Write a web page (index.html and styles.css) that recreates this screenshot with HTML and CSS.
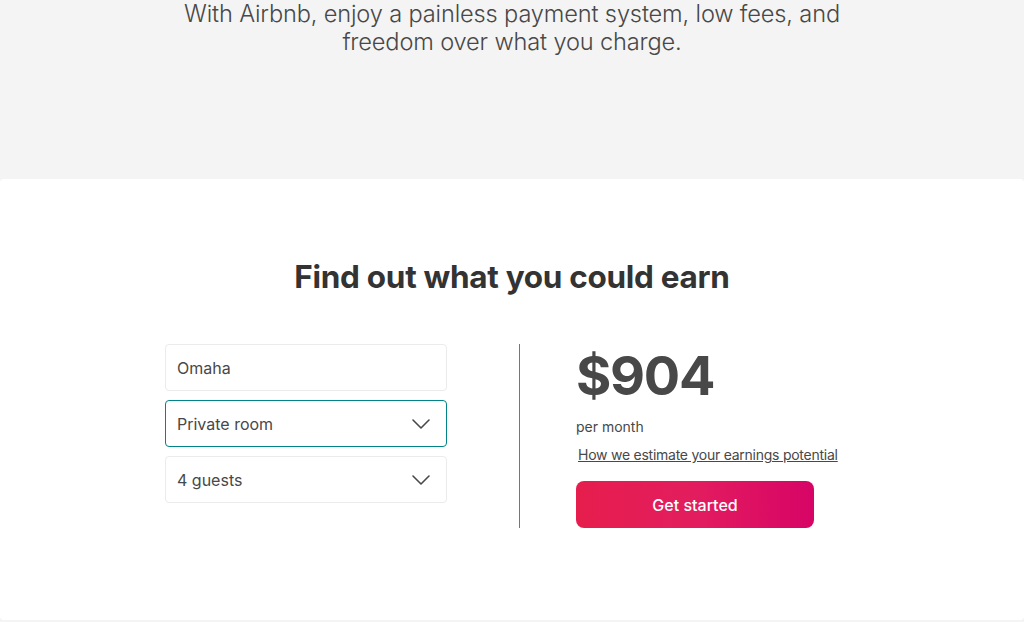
FILE: index.html
```html
<!DOCTYPE html>
<html lang="en">
<head>
<meta charset="utf-8">
<title>Airbnb earnings</title>
<link rel="stylesheet" href="styles.css">
</head>
<body>
<section class="intro">
  <p class="intro-text">With Airbnb, enjoy a painless payment system, low fees, and<br>freedom over what you charge.</p>
</section>
<section class="card">
  <h2 class="card-title">Find out what you could earn</h2>
  <div class="estimator">
    <div class="fields">
      <div class="field">Omaha</div>
      <div class="field field-select field-active">
        <span>Private room</span>
        <svg class="chev" width="18" height="10" viewBox="0 0 18 10"><path d="M1 1l8 8 8-8" fill="none" stroke="#484848" stroke-width="1.6" stroke-linecap="round" stroke-linejoin="round"/></svg>
      </div>
      <div class="field field-select">
        <span>4 guests</span>
        <svg class="chev" width="18" height="10" viewBox="0 0 18 10"><path d="M1 1l8 8 8-8" fill="none" stroke="#484848" stroke-width="1.6" stroke-linecap="round" stroke-linejoin="round"/></svg>
      </div>
    </div>
    <div class="divider"></div>
    <div class="result">
      <div class="amount">$904</div>
      <div class="per">per month</div>
      <a class="how" href="#">How we estimate your earnings potential</a>
      <button class="cta">Get started</button>
    </div>
  </div>
</section>
</body>
</html>
```

FILE: styles.css
```css
* { box-sizing: border-box; }
html, body { margin: 0; padding: 0; }
body {
  background: #f4f4f4;
  font-family: Inter, "Noto Sans", "Liberation Sans", sans-serif;
  color: #484848;
  width: 1024px;
  height: 622px;
  overflow: hidden;
}
.intro {
  height: 179px;
  display: flow-root;
}
.intro-text {
  margin: 0;
  text-align: center;
  font-size: 23.6px;
  line-height: 28px;
  font-weight: 300;
  color: #484848;
  letter-spacing: -0.15px;
}
.card {
  background: #fff;
  height: 441px;
  border-radius: 4px;
  padding-top: 76px;
}
.card-title {
  margin: 0;
  text-align: center;
  font-size: 31.5px;
  line-height: 44px;
  font-weight: 700;
  color: #333;
  letter-spacing: -0.3px;
}
.estimator {
  display: flex;
  justify-content: center;
  margin-top: 45px;
}
.fields {
  width: 282px;
  display: flex;
  flex-direction: column;
  gap: 9px;
}
.field {
  height: 47px;
  border: 1px solid #ebebeb;
  border-radius: 4px;
  padding: 0 11px;
  display: flex;
  align-items: center;
  justify-content: space-between;
  font-size: 16px;
  color: #484848;
}
.field-active { border-color: #008489; }
.chev { margin-right: 5px; }
.divider {
  width: 1px;
  background: #767676;
  margin: 0 56px 0 72px;
  height: 184px;
}
.result {
  width: 283px;
  display: flex;
  flex-direction: column;
  align-items: flex-start;
}
.amount {
  font-size: 54px;
  line-height: 64px;
  font-weight: 700;
  color: #484848;
  letter-spacing: -1.3px;
}
.per {
  font-size: 14px;
  line-height: 18px;
  margin-top: 10px;
  color: #484848;
}
.how {
  font-size: 14px;
  line-height: 18px;
  color: #484848;
  margin-top: 10px;
  margin-left: 2px;
  letter-spacing: -0.25px;
  text-decoration: underline;
}
.cta {
  margin-top: 17px;
  width: 238px;
  height: 47px;
  border: none;
  border-radius: 8px;
  background: linear-gradient(to right, #e61e4d 0%, #e31c5f 50%, #d70466 100%);
  color: #fff;
  font-family: inherit;
  font-size: 16px;
  font-weight: 500;
}
```
